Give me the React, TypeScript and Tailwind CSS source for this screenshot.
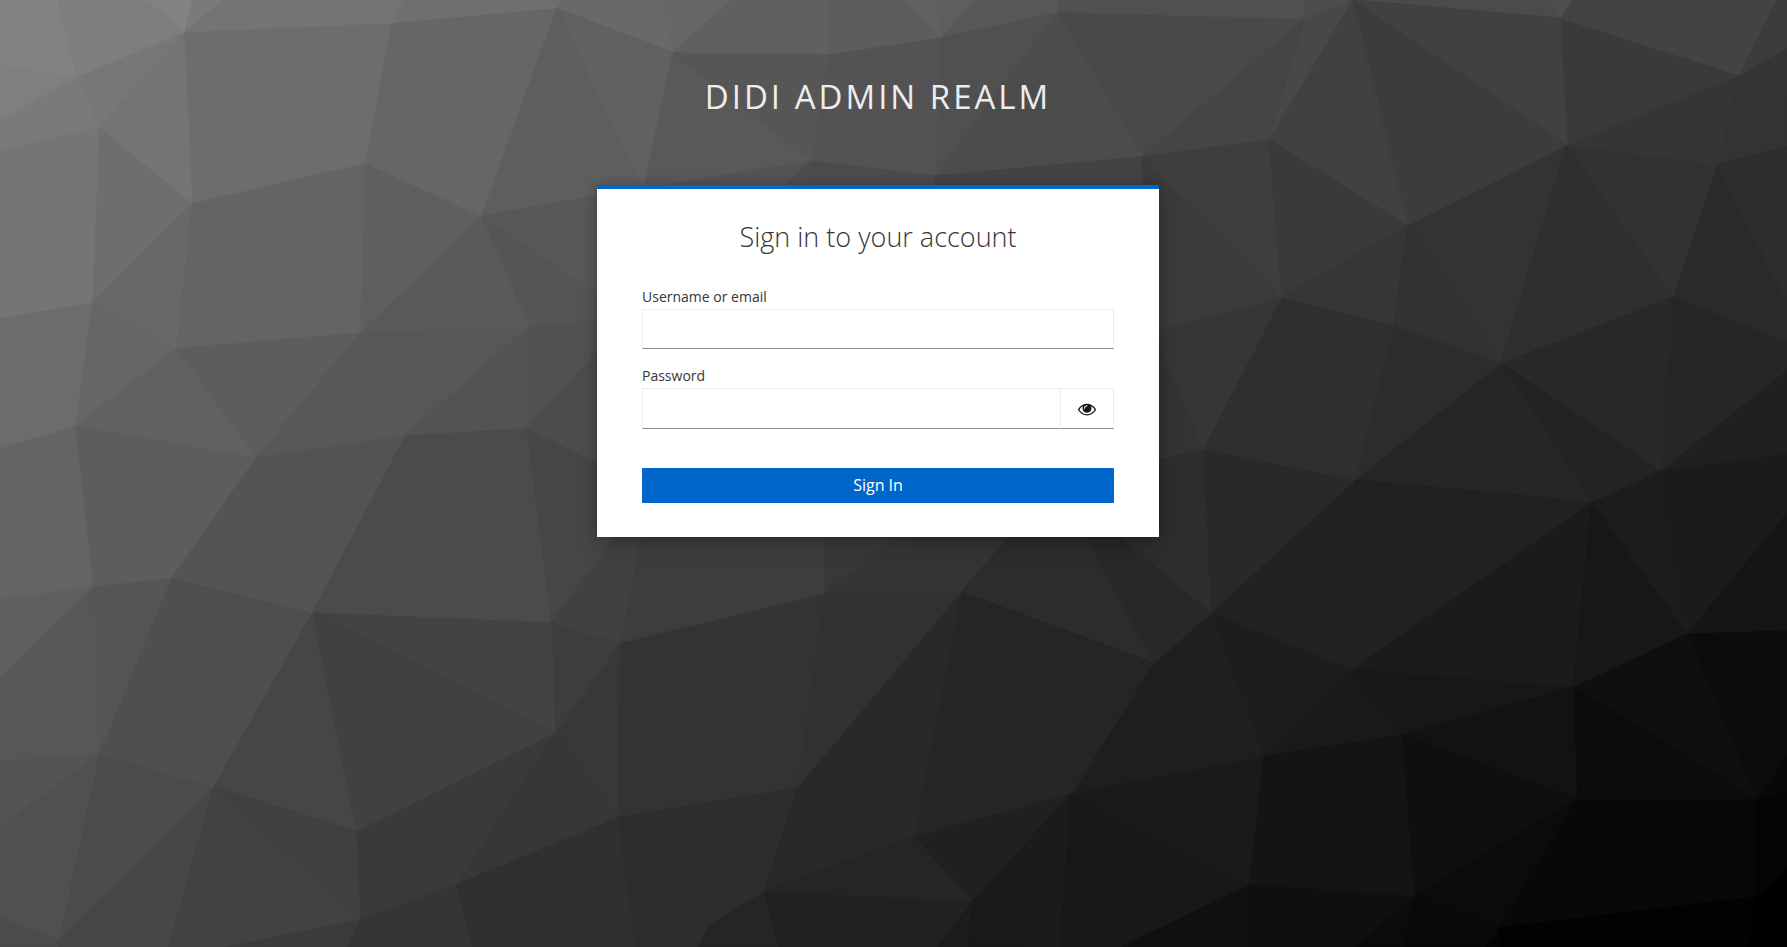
import { useState } from "react";

type Facet = [shade: string, points: string];

const facets: Facet[] = [
  ["#828282", "0,0 57,0 76,77 0,65"],
  ["#7e7e7e", "57,0 145,0 184,32 76,77"],
  ["#828282", "145,0 192,0 184,32"],
  ["#7a7a7a", "192,0 222,0 184,32"],
  ["#747474", "222,0 404,0 391,23 184,32"],
  ["#6f6f6f", "404,0 561,0 556,8 391,23"],
  ["#7f7f7f", "0,65 76,77 0,120"],
  ["#7a7a7a", "0,120 76,77 99,127 0,150"],
  ["#777777", "76,77 184,32 99,127"],
  ["#747474", "184,32 99,127 192,203"],
  ["#6d6d6d", "184,32 391,23 365,163 192,203"],
  ["#666666", "391,23 556,8 481,216 365,163"],
  ["#757575", "0,150 99,127 92,302 0,318"],
  ["#6e6e6e", "99,127 192,203 92,302"],
  ["#686868", "192,203 92,302 176,348"],
  ["#646464", "192,203 365,163 360,332 176,348"],
  ["#5f5f5f", "365,163 481,216 360,332"],
  ["#5a5a5a", "481,216 360,332 529,326"],
  ["#555555", "481,216 529,326 629,316"],
  ["#585858", "481,216 629,316 643,188"],
  ["#5e5e5e", "556,8 481,216 643,188"],
  ["#616161", "556,8 643,188 672,52"],
  ["#696969", "561,0 662,0 672,52 556,8"],
  ["#676767", "662,0 730,0 672,52"],
  ["#606060", "730,0 826,0 829,54 672,52"],
  ["#5d5d5d", "826,0 903,0 941,37 829,54"],
  ["#616161", "903,0 935,0 941,37"],
  ["#5e5e5e", "935,0 975,0 941,37"],
  ["#575757", "975,0 1058,0 1057,12 941,37"],
  ["#525252", "1058,0 1086,0 1057,12"],
  ["#505050", "1086,0 1303,0 1304,19 1057,12"],
  ["#565656", "672,52 829,54 811,160"],
  ["#595959", "672,52 811,160 643,188"],
  ["#535353", "829,54 941,37 935,175 811,160"],
  ["#505050", "941,37 1057,12 935,175"],
  ["#4c4c4c", "1057,12 1142,156 935,175"],
  ["#494949", "1057,12 1304,19 1142,156"],
  ["#454545", "1304,19 1142,156 1269,139"],
  ["#4d4d4d", "1303,0 1352,0 1304,19"],
  ["#484848", "1304,19 1352,0 1269,139"],
  ["#414141", "1352,0 1269,139 1408,225"],
  ["#3c3c3c", "1352,0 1408,225 1567,145"],
  ["#414141", "1352,0 1560,18 1567,145"],
  ["#4b4b4b", "1352,0 1547,0 1560,18"],
  ["#4f4f4f", "1547,0 1572,0 1560,18"],
  ["#434343", "1572,0 1776,0 1739,75 1560,18"],
  ["#3c3c3c", "1776,0 1787,0 1787,48 1739,75"],
  ["#3a3a3a", "1560,18 1567,145 1739,75"],
  ["#353535", "1567,145 1739,75 1717,164"],
  ["#353535", "1739,75 1787,48 1787,98"],
  ["#333333", "1739,75 1787,98 1787,146 1717,164"],
  ["#323232", "1567,145 1717,164 1673,296"],
  ["#2d2d2d", "1717,164 1787,146 1787,302"],
  ["#2a2a2a", "1717,164 1673,296 1787,342 1787,302"],
  ["#2f2f2f", "1567,145 1673,296 1501,363"],
  ["#333333", "1567,145 1408,225 1501,363"],
  ["#323232", "1408,225 1394,325 1501,363"],
  ["#363636", "1408,225 1282,297 1394,325"],
  ["#3a3a3a", "1269,139 1408,225 1282,297"],
  ["#3e3e3e", "1142,156 1269,139 1282,297"],
  ["#3b3b3b", "1142,156 1282,297 1154,331"],
  ["#363636", "1154,331 1282,297 1203,449"],
  ["#2f2f2f", "1282,297 1394,325 1355,480 1203,449"],
  ["#2c2c2c", "1394,325 1501,363 1355,480"],
  ["#333333", "1154,331 1203,449 1057,482"],
  ["#2d2d2d", "1203,449 1057,482 1211,613"],
  ["#282828", "1057,482 1154,663 1211,613"],
  ["#292929", "1203,449 1211,613 1355,480"],
  ["#222222", "1355,480 1211,613 1352,669"],
  ["#212121", "1355,480 1352,669 1592,502"],
  ["#262626", "1501,363 1355,480 1592,502"],
  ["#232323", "1501,363 1592,502 1660,471"],
  ["#282828", "1501,363 1673,296 1660,471"],
  ["#262626", "1673,296 1660,471 1787,370 1787,342"],
  ["#202020", "1660,471 1787,370 1787,453"],
  ["#1b1b1b", "1660,471 1787,453 1787,512 1687,633"],
  ["#1c1c1c", "1660,471 1592,502 1687,633"],
  ["#171717", "1592,502 1687,633 1573,687"],
  ["#1b1b1b", "1592,502 1352,669 1573,687"],
  ["#151515", "1687,633 1787,512 1787,630"],
  ["#6c6c6c", "92,302 0,318 0,448 75,426"],
  ["#666666", "92,302 176,348 75,426"],
  ["#616161", "176,348 75,426 256,457"],
  ["#5d5d5d", "176,348 360,332 256,457"],
  ["#585858", "360,332 405,435 256,457"],
  ["#575757", "360,332 529,326 405,435"],
  ["#535353", "529,326 405,435 526,428"],
  ["#515151", "529,326 526,428 629,316"],
  ["#4c4c4c", "629,316 526,428 650,489"],
  ["#646464", "75,426 0,448 0,599 93,586"],
  ["#5d5d5d", "75,426 256,457 171,578 93,586"],
  ["#545454", "256,457 171,578 312,612"],
  ["#535353", "256,457 312,612 405,435"],
  ["#4b4b4b", "405,435 312,612 551,622 526,428"],
  ["#464646", "526,428 551,622 650,489"],
  ["#414141", "551,622 650,489 620,643"],
  ["#5f5f5f", "93,586 0,599 0,678"],
  ["#575757", "93,586 0,678 0,760 99,754"],
  ["#555555", "93,586 171,578 99,754"],
  ["#4f4f4f", "171,578 99,754 213,787"],
  ["#4e4e4e", "171,578 213,787 312,612"],
  ["#545454", "99,754 0,760 0,826"],
  ["#505050", "99,754 0,826 0,917 59,939"],
  ["#4b4b4b", "0,917 59,939 57,947 0,947"],
  ["#4b4b4b", "99,754 213,787 59,939"],
  ["#474747", "213,787 59,939 57,947 168,947"],
  ["#424242", "213,787 168,947 222,947 360,919"],
  ["#404040", "213,787 360,919 356,831"],
  ["#464646", "213,787 312,612 356,831"],
  ["#414141", "312,612 356,831 555,733"],
  ["#434343", "312,612 555,733 551,622"],
  ["#3d3d3d", "551,622 555,733 620,643"],
  ["#3a3a3a", "356,831 555,733 456,884 360,919"],
  ["#373737", "555,733 456,884 617,817"],
  ["#383838", "555,733 617,817 620,643"],
  ["#303030", "456,884 617,817 635,947 472,947"],
  ["#353535", "456,884 360,919 387,947 472,947"],
  ["#3b3b3b", "360,919 222,947 347,947"],
  ["#353535", "360,919 347,947 362,947"],
  ["#343434", "360,919 362,947 387,947"],
  ["#4d4d4d", "811,160 781,190 817,190"],
  ["#535353", "811,160 643,188 781,190"],
  ["#4b4b4b", "811,160 817,190 933,190 935,175"],
  ["#434343", "935,175 1142,156 1154,331 933,190"],
  ["#3d3d3d", "650,489 620,643 825,593 822,500"],
  ["#333333", "620,643 825,593 798,787 617,817"],
  ["#313131", "825,593 961,592 798,787"],
  ["#292929", "961,592 798,787 914,836"],
  ["#262626", "961,592 914,836 1072,793"],
  ["#252525", "961,592 1072,793 1154,663"],
  ["#2c2c2c", "961,592 1154,663 1057,482"],
  ["#353535", "825,593 961,592 903,532"],
  ["#383838", "825,593 822,500 903,532"],
  ["#343434", "903,532 961,592 1057,482"],
  ["#1f1f1f", "1154,663 1211,613 1263,757"],
  ["#1e1e1e", "1154,663 1072,793 1263,757"],
  ["#1d1d1d", "1211,613 1352,669 1263,757"],
  ["#1a1a1a", "1072,793 1263,757 1249,884"],
  ["#181818", "1072,793 1249,884 1120,947 1060,947"],
  ["#1b1b1b", "973,901 1072,793 1060,947 1023,947"],
  ["#191919", "973,901 1023,947 968,947"],
  ["#1c1c1c", "973,901 968,947 938,947"],
  ["#202020", "914,836 1072,793 973,901"],
  ["#252525", "914,836 764,891 973,901"],
  ["#212121", "764,891 973,901 938,947 779,947"],
  ["#282828", "798,787 914,836 764,891"],
  ["#2d2d2d", "617,817 798,787 764,891 709,925 697,947 635,947"],
  ["#252525", "709,925 764,891 779,947 697,947"],
  ["#101010", "1249,884 1120,947 1247,947"],
  ["#141414", "1263,757 1402,735 1414,896 1249,884"],
  ["#0f0f0f", "1249,884 1414,896 1356,947 1247,947"],
  ["#0b0b0b", "1414,896 1356,947 1404,947"],
  ["#090909", "1414,896 1404,947 1485,947 1499,927"],
  ["#0b0b0b", "1414,896 1577,799 1499,927"],
  ["#0f0f0f", "1402,735 1577,799 1414,896"],
  ["#121212", "1402,735 1573,687 1577,799"],
  ["#171717", "1352,669 1573,687 1402,735"],
  ["#191919", "1352,669 1402,735 1263,757"],
  ["#0c0c0c", "1573,687 1577,799 1757,799"],
  ["#0f0f0f", "1573,687 1687,633 1757,799"],
  ["#0c0c0c", "1687,633 1787,630 1787,754 1757,799"],
  ["#080808", "1757,799 1787,754 1787,791"],
  ["#050505", "1757,799 1787,791 1787,868 1757,896"],
  ["#070707", "1577,799 1757,799 1757,896"],
  ["#080808", "1577,799 1757,896 1499,927"],
  ["#000000", "1757,896 1787,868 1787,947 1749,947"],
  ["#020202", "1757,896 1499,927 1501,947 1749,947"],
  ["#040404", "1499,927 1485,947 1501,947"],
];

// Painted from the dark corner to the light one, so each lighter facet's edge covers the seam below it.
const paintOrder = [...facets].reverse();

function Backdrop() {
  return (
    <svg
      aria-hidden="true"
      className="absolute inset-0 h-full w-full"
      viewBox="0 0 1787 947"
      preserveAspectRatio="xMidYMid slice"
    >
      {paintOrder.map(([shade, points]) => (
        <polygon key={points} points={points} fill={shade} stroke={shade} strokeWidth="1" strokeLinejoin="round" />
      ))}
    </svg>
  );
}

function EyeIcon() {
  return (
    <svg aria-hidden="true" viewBox="0 0 1792 1792" className="size-[18px] fill-current">
      <path d="M1664 960q-152-236-381-353 61 104 61 225 0 185-131.5 316.5t-316.5 131.5-316.5-131.5-131.5-316.5q0-121 61-225-229 117-381 353 133 205 333.5 326.5t434.5 121.5 434.5-121.5 333.5-326.5zm-720-384q0-20-14-34t-34-14q-125 0-214.5 89.5t-89.5 214.5q0 20 14 34t34 14 34-14 14-34q0-86 61-147t147-61q20 0 34-14t14-34zm848 384q0 34-20 69-140 230-376.5 368.5t-499.5 138.5-499.5-139-376.5-368q-20-35-20-69t20-69q140-229 376.5-368t499.5-139 499.5 139 376.5 368q20 35 20 69z" />
    </svg>
  );
}

export default function App() {
  const [visible, setVisible] = useState(false);

  return (
    <div className="relative isolate min-h-screen bg-[#3b3b3b] pr-[31px] font-['Open_Sans',sans-serif] text-[#363636]">
      <div className="absolute inset-0 -z-10 overflow-hidden">
        <Backdrop />
      </div>

      <header className="px-3 pt-[77px] pb-[68px] text-center text-[33px] leading-10 tracking-[3px] text-[#ededed] uppercase">
        Didi Admin Realm
      </header>

      <main className="mx-auto w-full max-w-[562px] border-t-4 border-[#0066cc] bg-white px-[45px] pt-[30px] pb-[34px] shadow-[0_10px_20px_rgba(3,3,3,0.15),0_0_10px_rgba(3,3,3,0.2)]">
        <h1 className="text-center text-[27px] leading-9 font-light">Sign in to your account</h1>

        <form className="mt-[33px]" onSubmit={(e) => e.preventDefault()}>
          <div>
            <label htmlFor="username" className="block pb-1 text-sm leading-[17px]">
              Username or email
            </label>
            <input
              id="username"
              type="text"
              autoComplete="off"
              className="block h-10 w-full border border-[#ededed] border-b-[#8a8d90] bg-white px-2 outline-none"
            />
          </div>

          <div className="mt-[18px]">
            <label htmlFor="password" className="block pb-1 text-sm leading-[17px]">
              Password
            </label>
            <div className="flex h-[41px]">
              <input
                id="password"
                type={visible ? "text" : "password"}
                autoComplete="off"
                className="min-w-0 flex-1 border border-r-0 border-[#ededed] border-b-[#8a8d90] bg-white px-2 outline-none"
              />
              <button
                type="button"
                aria-label="Show password"
                aria-pressed={visible}
                onClick={() => setVisible(!visible)}
                className="flex w-[54px] items-center justify-center border border-[#ededed] border-b-[#8a8d90] bg-white text-[#151515]"
              >
                <EyeIcon />
              </button>
            </div>
          </div>

          <button
            type="submit"
            className="mt-[39px] block h-[35px] w-full rounded-[1px] bg-[#0066cc] pb-0.5 text-base text-white"
          >
            Sign In
          </button>
        </form>
      </main>
    </div>
  );
}
